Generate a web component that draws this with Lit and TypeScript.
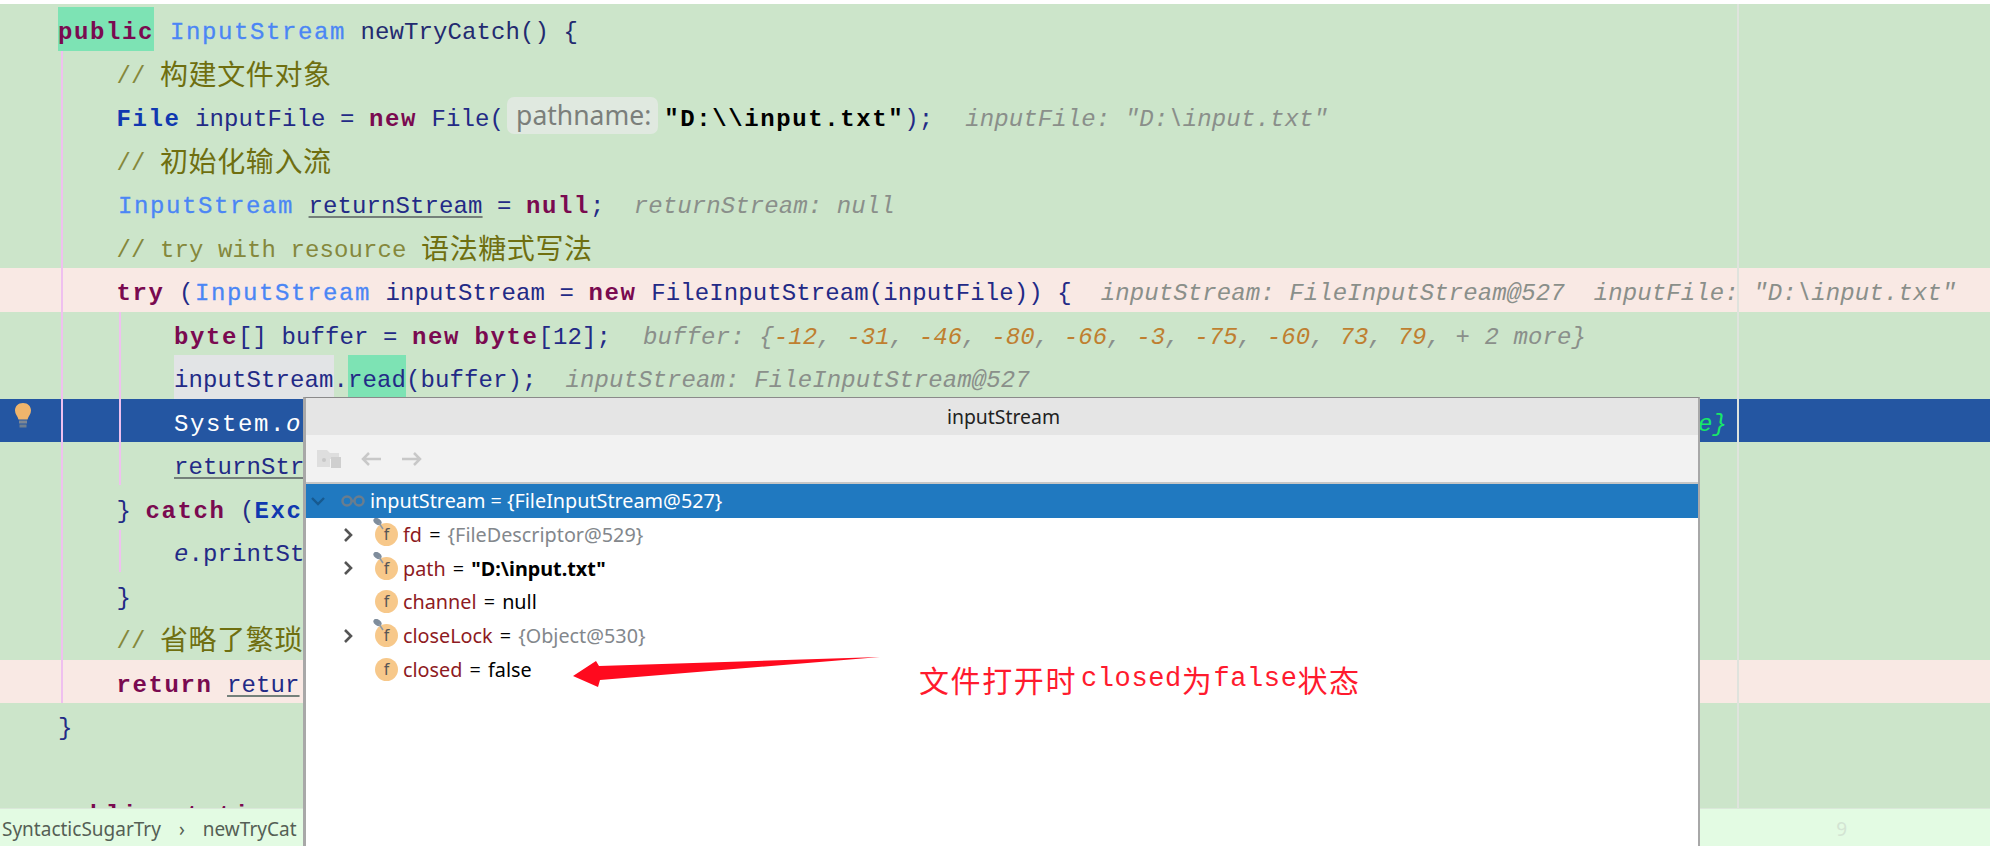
import { LitElement, html, css } from "lit";
import { customElement } from "lit/decorators.js";

type Seg = [string, string];
type Line = { cls?: string; indent: number; segs: Seg[] };

const hintNums = (nums: string[]): Seg[] => {
  const out: Seg[] = [];
  nums.forEach((n) => {
    out.push(["n", n]);
    out.push(["h", ", "]);
  });
  return out;
};

const LINES: Line[] = [
  { indent: 0, segs: [["k hl", "public"], ["v", " "], ["l", "InputStream"], ["m", " newTryCatch() {"]] },
  { indent: 1, segs: [["c", "// "], ["z", "构建文件对象"]] },
  { indent: 1, segs: [["t", "File"], ["v", " inputFile = "], ["k", "new"], ["v", " File("], ["p", "pathname:"], ["s", "\"D:\\\\input.txt\""], ["v", ");"], ["h far", "  inputFile: \"D:\\input.txt\""]] },
  { indent: 1, segs: [["c", "// "], ["z", "初始化输入流"]] },
  { indent: 1, segs: [["l", "InputStream"], ["v", " "], ["v u", "returnStream"], ["v", " = "], ["k", "null"], ["v", ";"], ["h", "  returnStream: null"]] },
  { indent: 1, segs: [["c", "// try with resource "], ["z", "语法糖式写法"]] },
  { indent: 1, cls: "pink", segs: [["k", "try"], ["v", " ("], ["l", "InputStream"], ["v", " inputStream = "], ["k", "new"], ["v", " FileInputStream(inputFile)) {"], ["h", "  inputStream: FileInputStream@527  inputFile: \"D:\\input.txt\""]] },
  { indent: 2, segs: [["k", "byte"], ["v", "[] buffer = "], ["k", "new"], ["v", " "], ["k", "byte"], ["v", "[12];"], ["h near", "  buffer: {"], ...hintNums(["-12", "-31", "-46", "-80", "-66", "-3", "-75", "-60", "73", "79"]), ["h", "+ 2 more}"]] },
  { indent: 2, segs: [["v gr", "inputStream"], ["v", "."], ["v hl", "read"], ["v", "(buffer);"], ["h", "  inputStream: FileInputStream@527"]] },
  { indent: 2, cls: "sel", segs: [["w", "System."], ["wi", "o"]] },
  { indent: 2, segs: [["v u", "returnStr"]] },
  { indent: 1, segs: [["v", "} "], ["k", "catch"], ["v", " ("], ["t", "Exc"]] },
  { indent: 2, segs: [["v i", "e"], ["v", ".printSt"]] },
  { indent: 1, segs: [["v", "}"]] },
  { indent: 1, segs: [["c", "// "], ["z", "省略了繁琐"]] },
  { indent: 1, cls: "pink", segs: [["k", "return"], ["v", " "], ["v u", "retur"]] },
  { indent: 0, segs: [["v", "}"]] },
  { indent: 0, segs: [] },
  { indent: 0, segs: [["k", "public static"]] },
];

const FIELDS = [
  { chev: true, pin: true, name: "fd", val: "{FileDescriptor@529}", vc: "gray" },
  { chev: true, pin: true, name: "path", val: "\"D:\\input.txt\"", vc: "bold" },
  { chev: false, pin: false, name: "channel", val: "null", vc: "" },
  { chev: true, pin: true, name: "closeLock", val: "{Object@530}", vc: "gray" },
  { chev: false, pin: false, name: "closed", val: "false", vc: "" },
];

@customElement("app-root")
export class AppRoot extends LitElement {
  static styles = css`
    :host {
      display: block;
      position: relative;
      width: 1990px;
      height: 850px;
      background: #fff;
      overflow: hidden;
      font-family: "Liberation Mono", monospace;
    }
    .editor {
      position: relative;
      margin-top: 4px;
      height: 804px;
      padding-top: 3px;
      box-sizing: border-box;
      background: #cce5ca;
      overflow: hidden;
    }
    .row {
      display: flex;
      align-items: center;
      height: 43.5px;
      position: relative;
      font-size: 24px;
      white-space: pre;
      padding-left: 58px;
      box-sizing: border-box;
    }
    .row.ind1 { padding-left: 116.5px; }
    .row.ind2 { padding-left: 174px; }
    .row.pink { background: #f9e9e4; }
    .row.sel { background: #2456a2; }
    .row span {
      display: block;
      box-sizing: border-box;
      padding-top: 4px;
      line-height: 43.5px;
      height: 43.5px;
      letter-spacing: 0.1px;
    }
    .k { color: #7a0a50; font-weight: 700; letter-spacing: 1.6px !important; }
    .t { color: #1038b0; font-weight: 700; letter-spacing: 1.6px !important; }
    .l { color: #4b86f5; letter-spacing: 1.6px !important; margin-left: 1.5px; -webkit-text-stroke: 0.3px #4b86f5; }
    .v { color: #232a86; }
    .m { color: #232a70; }
    .c { color: #85883c; }
    .row .z {
      color: #6f6f10;
      font-family: "Noto Sans CJK SC", sans-serif;
      font-size: 28px;
      letter-spacing: 0.6px;
      padding-top: 1px;
    }
    .s { color: #000; font-weight: 700; letter-spacing: 1.6px !important; margin-left: 6px; }
    .h { color: #8a8f8a; font-style: italic; }
    .row .far { margin-left: 3px; }
    .row .near { margin-left: 3px; }
    .n { color: #bf7f30; font-style: italic; }
    .w { color: #fff; letter-spacing: 1.6px !important; }
    .wi { color: #fff; font-style: italic; }
    .i { font-style: italic; }
    .u {
      text-decoration: underline;
      text-decoration-color: #74807a;
      text-decoration-thickness: 2px;
      text-underline-offset: 3px;
    }
    .row .hl { background: #7de3b4; }
    .row .gr { background: #e2e4e6; }
    .row .p {
      align-self: center;
      height: 37px;
      line-height: 37px;
      padding: 0 7px 0 9px;
      margin-left: 3px;
      background: #e0e9e0;
      border-radius: 7px;
      color: #7b7f7b;
      font-family: "Noto Sans", sans-serif;
      font-size: 26.5px;
      letter-spacing: 0;
    }
    .row .green {
      position: absolute;
      right: 263px;
      color: #18e868;
      font-style: italic;
    }
    .guide { position: absolute; width: 2px; background: #efc0ef; }
    .g1 { left: 61px; top: 47px; height: 652px; }
    .g2 { left: 119px; top: 308px; height: 173px; }
    .g3 { left: 119px; top: 526px; height: 42px; }
    .margin { position: absolute; left: 1737px; top: 0; bottom: 0; width: 2px; background: #dfe3dd; }
    .bulb { position: absolute; left: 14px; top: 4px; width: 18px; height: 26px; }
    .status {
      display: flex;
      align-items: center;
      justify-content: space-between;
      height: 38px;
      padding: 2px 143px 0 2px;
      box-sizing: border-box;
      background: #e3fbe3;
      border-top: 1px solid #dbe8da;
      font-family: "Noto Sans", sans-serif;
      font-size: 19px;
      color: #555f55;
    }
    .crumbs { display: flex; gap: 18px; align-items: center; }
    .nine { color: #d3e4d3; }
    .popup {
      position: absolute;
      left: 303px;
      top: 397px;
      width: 1397px;
      height: 449px;
      box-sizing: border-box;
      display: flex;
      flex-direction: column;
      background: #fff;
      border-top: 1px solid #8a8a8a;
      border-left: 3px solid #a8a8a8;
      border-right: 2px solid #a8a8a8;
      font-family: "Noto Sans", sans-serif;
    }
    .title {
      height: 37px;
      flex: none;
      display: flex;
      align-items: center;
      justify-content: center;
      padding-left: 3px;
      background: #e5e5e5;
      font-size: 19.400px;
      color: #222;
    }
    .tools {
      height: 47px;
      flex: none;
      display: flex;
      align-items: center;
      gap: 19px;
      padding-left: 11px;
      background: #f2f2f2;
      border-bottom: 2px solid #c6c6c6;
    }
    .tree { display: flex; flex-direction: column; }
    .node {
      display: flex;
      align-items: center;
      height: 33.7px;
      font-size: 19.8px;
      white-space: pre;
      padding-left: 37px;
      color: #000;
    }
    .node.top {
      background: #2079c0;
      color: #fff;
      padding-left: 5px;
    }
    .chev { width: 32px; flex: none; display: flex; align-items: center; }
    .chev.down { width: 30px; }
    .glasses { margin-right: 5px; }
    .ficon {
      position: relative;
      width: 23px;
      height: 23px;
      flex: none;
      margin-right: 5px;
      border-radius: 50%;
      background: #f7c88a;
      color: #555;
      font-size: 16px;
      line-height: 23px;
      text-align: center;
    }
    .pin { position: absolute; left: -2px; top: -5px; }
    .eq { margin: 0 2px; }
    .name { color: #8e1a22; }
    .gray { color: #83878c; }
    .bold { font-weight: 700; }
    .arrow { position: absolute; left: 0; top: 0; pointer-events: none; }
    .note {
      position: absolute;
      left: 919px;
      top: 659px;
      display: flex;
      align-items: center;
      color: #ff1a2e;
      white-space: pre;
      line-height: 40px;
    }
    .note .cj { font-family: "Noto Sans CJK SC", sans-serif; font-size: 30px; letter-spacing: 1.6px; }
    .note .la { font-family: "Liberation Mono", monospace; font-size: 27px; letter-spacing: 0.6px; }
    .note .first { margin-left: 4px; }
  `;

  private chevron(down = false) {
    return down
      ? html`<svg width="14" height="10" viewBox="0 0 14 10"><path d="M1 2l6 6 6-6" fill="none" stroke="#175a90" stroke-width="2.4"/></svg>`
      : html`<svg width="10" height="16" viewBox="0 0 10 16"><path d="M2 2l6 6-6 6" fill="none" stroke="#555" stroke-width="2.6"/></svg>`;
  }

  private renderRow(line: Line) {
    const isSel = line.cls === "sel";
    return html`<div class="row ind${line.indent} ${line.cls ?? ""}">
      ${line.segs.map(([c, t]) => html`<span class=${c}>${t}</span>`)}
      ${isSel
        ? html`<svg class="bulb" viewBox="0 0 18 26">
              <path d="M9 0C4 0 1 3.500 1 7.500c0 3.500 2.500 5.500 3.500 9h9c1-3.500 3.500-5.500 3.500-9C17 3.500 14 0 9 0z" fill="#f0b56c"/>
              <rect x="5" y="17.500" width="8" height="3" fill="#7d8794"/>
              <rect x="5.500" y="21.500" width="7" height="3" fill="#6e7f90"/>
            </svg>
            <span class="green">e}</span>`
        : ""}
    </div>`;
  }

  render() {
    return html`
      <div class="editor">
        ${LINES.map((l) => this.renderRow(l))}
        <div class="guide g1"></div>
        <div class="guide g2"></div>
        <div class="guide g3"></div>
        <div class="margin"></div>
      </div>
      <div class="status">
        <div class="crumbs"><span>SyntacticSugarTry</span><span>›</span><span>newTryCat</span></div>
        <span class="nine">9</span>
      </div>
      <div class="popup">
        <div class="title">inputStream</div>
        <div class="tools">
          <svg width="24" height="18" viewBox="0 0 24 18">
            <path d="M0 0h10l3 3h9v6H13v8H0z" fill="#dedede"/>
            <rect x="14" y="7" width="10" height="11" fill="#cfcfcf"/>
            <circle cx="7" cy="10" r="2" fill="#c8c8c8"/>
          </svg>
          <svg width="22" height="16" viewBox="0 0 22 16"><path d="M21 8H3M9 2L3 8l6 6" fill="none" stroke="#c8c8c8" stroke-width="2.500"/></svg>
          <svg width="22" height="16" viewBox="0 0 22 16"><path d="M1 8h18M13 2l6 6-6 6" fill="none" stroke="#c8c8c8" stroke-width="2.500"/></svg>
        </div>
        <div class="tree">
          <div class="node top">
            <span class="chev down">${this.chevron(true)}</span>
            <svg class="glasses" width="24" height="12" viewBox="0 0 24 12">
              <circle cx="6" cy="6" r="4.500" fill="none" stroke="#6a7d8e" stroke-width="2.500"/>
              <circle cx="18" cy="6" r="4.500" fill="none" stroke="#6a7d8e" stroke-width="2.500"/>
              <path d="M10.500 6h3" stroke="#6a7d8e" stroke-width="2.500"/>
            </svg>
            <span>inputStream = {FileInputStream@527}</span>
          </div>
          ${FIELDS.map(
            (f) => html`<div class="node">
              <span class="chev">${f.chev ? this.chevron() : ""}</span>
              <span class="ficon">f${f.pin
                ? html`<svg class="pin" width="12" height="12" viewBox="0 0 12 12"><ellipse cx="4.500" cy="3.500" rx="4.500" ry="3" transform="rotate(35 4.500 3.500)" fill="#7f8d9c"/><path d="M6 5l4 6" stroke="#8d99a5" stroke-width="1.500"/></svg>`
                : ""}</span>
              <span class="name">${f.name}</span><span class="eq"> = </span><span class=${f.vc}>${f.val}</span>
            </div>`
          )}
        </div>
      </div>
      <svg class="arrow" width="1990" height="850" viewBox="0 0 1990 850">
        <polygon points="573,676 596,661 599,666 880,657 600,680 598,687" fill="#ff0a1e"/>
      </svg>
      <div class="note"><span class="cj">文件打开时</span><span class="la first">closed</span><span class="cj">为</span><span class="la">false</span><span class="cj">状态</span></div>
    `;
  }
}
